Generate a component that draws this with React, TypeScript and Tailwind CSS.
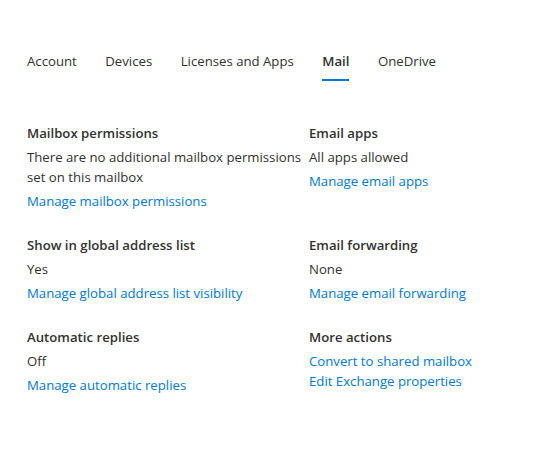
const TABS = ['Account', 'Devices', 'Licenses and Apps', 'Mail', 'OneDrive'];

type Section = { title: string; text?: string; links: string[] };

const LEFT: Section[] = [
  { title: 'Mailbox permissions', text: 'There are no additional mailbox permissions set on this mailbox', links: ['Manage mailbox permissions'] },
  { title: 'Show in global address list', text: 'Yes', links: ['Manage global address list visibility'] },
  { title: 'Automatic replies', text: 'Off', links: ['Manage automatic replies'] },
];

const RIGHT: Section[] = [
  { title: 'Email apps', text: 'All apps allowed', links: ['Manage email apps'] },
  { title: 'Email forwarding', text: 'None', links: ['Manage email forwarding'] },
  { title: 'More actions', links: ['Convert to shared mailbox', 'Edit Exchange properties'] },
];

function Block({ s }: { s: Section }) {
  return (
    <div className="flex flex-col pr-[4px]">
      <h3 className="font-semibold leading-5 text-[#323130]">{s.title}</h3>
      {s.text && <p className="mt-1 leading-5 text-[#323130]">{s.text}</p>}
      <div className="mt-1 flex flex-col">
        {s.links.map(l => (
          <a key={l} href="#" className="leading-5 text-[#0078d4]">{l}</a>
        ))}
      </div>
    </div>
  );
}

export default function App() {
  return (
    <div className="min-h-[466px] w-[539px] bg-white px-[27px] pt-[49px] text-[13.2px] font-['Segoe_UI','Open_Sans',sans-serif]">
      {/* Tabs */}
      <nav className="flex gap-[28.5px] text-[#323130]">
        {TABS.map(t => (
          <div key={t} className="flex flex-col">
            <span className={t === 'Mail' ? 'font-semibold leading-6' : 'leading-6'}>{t}</span>
            <span className={t === 'Mail' ? 'mt-[6px] h-[2px] bg-[#0078d4]' : 'mt-[6px] h-[2px]'} />
          </div>
        ))}
      </nav>

      {/* Sections */}
      <div className="mt-[42px] grid grid-cols-[282px_1fr] gap-y-6">
        {LEFT.map((l, i) => (
          <div key={l.title} className="contents">
            <Block s={l} />
            <Block s={RIGHT[i]} />
          </div>
        ))}
      </div>
    </div>
  );
}
